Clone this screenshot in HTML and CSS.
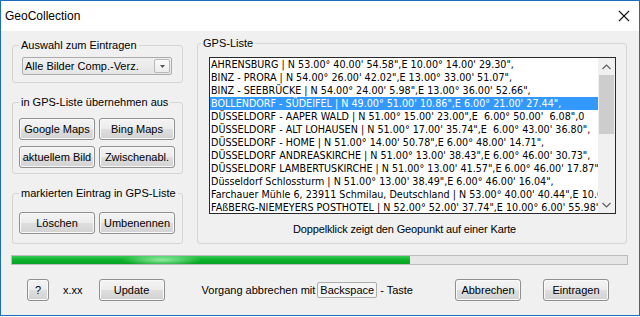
FILE: index.html
```html
<!DOCTYPE html>
<html lang="de">
<head>
<meta charset="utf-8">
<title>GeoCollection</title>
<link rel="stylesheet" href="styles.css">
</head>
<body>
<div class="window">
  <div class="titlebar">
    <span class="title">GeoCollection</span>
    <svg class="close" width="12" height="12" viewBox="0 0 12 12"><path d="M1 1 L11 11 M11 1 L1 11" stroke="#111" stroke-width="1.1" fill="none"/></svg>
  </div>
  <div class="main">
    <div class="leftcol">
      <fieldset class="group g1">
        <legend>Auswahl zum Eintragen</legend>
        <div class="combo">
          <span class="combo-text">Alle Bilder Comp.-Verz.</span>
          <span class="combo-btn"><svg width="5" height="3" viewBox="0 0 5 3"><path d="M0 0 H5 L2.5 3 Z" fill="#555"/></svg></span>
        </div>
      </fieldset>
      <fieldset class="group g2">
        <legend>in GPS-Liste übernehmen aus</legend>
        <div class="btngrid">
          <button class="btn w76">Google Maps</button>
          <button class="btn w76">Bing Maps</button>
          <button class="btn w76">aktuellem Bild</button>
          <button class="btn w76">Zwischenabl.</button>
        </div>
      </fieldset>
      <fieldset class="group g3">
        <legend>markierten Eintrag in GPS-Liste</legend>
        <div class="btngrid">
          <button class="btn w76">Löschen</button>
          <button class="btn w76">Umbenennen</button>
        </div>
      </fieldset>
    </div>
    <fieldset class="group gps">
      <legend>GPS-Liste</legend>
      <div class="listbox">
        <div class="items">
          <div class="item">AHRENSBURG | N 53.00° 40.00' 54.58",E 10.00° 14.00' 29.30",</div>
          <div class="item">BINZ - PRORA | N 54.00° 26.00' 42.02",E 13.00° 33.00' 51.07",</div>
          <div class="item">BINZ - SEEBRÜCKE | N 54.00° 24.00' 5.98",E 13.00° 36.00' 52.66",</div>
          <div class="item sel">BOLLENDORF - SÜDEIFEL | N 49.00° 51.00' 10.86",E 6.00° 21.00' 27.44",</div>
          <div class="item">DÜSSELDORF - AAPER WALD | N 51.00° 15.00' 23.00",E &nbsp;6.00° 50.00' &nbsp;6.08",0</div>
          <div class="item">DÜSSELDORF - ALT LOHAUSEN | N 51.00° 17.00' 35.74",E &nbsp;6.00° 43.00' 36.80",</div>
          <div class="item">DÜSSELDORF - HOME | N 51.00° 14.00' 50.78",E 6.00° 48.00' 14.71",</div>
          <div class="item">DÜSSELDORF ANDREASKIRCHE | N 51.00° 13.00' 38.43",E 6.00° 46.00' 30.73",</div>
          <div class="item">DÜSSELDORF LAMBERTUSKIRCHE | N 51.00° 13.00' 41.57",E 6.00° 46.00' 17.87",</div>
          <div class="item">Düsseldorf Schlossturm | N 51.00° 13.00' 38.49",E 6.00° 46.00' 16.04",</div>
          <div class="item">Farchauer Mühle 6, 23911 Schmilau, Deutschland | N 53.00° 40.00' 40.44",E 10.00°</div>
          <div class="item">FAßBERG-NIEMEYERS POSTHOTEL | N 52.00° 52.00' 37.74",E 10.00° 6.00' 55.98",</div>
        </div>
        <div class="scrollbar">
          <span class="arrow"><svg width="9" height="6" viewBox="0 0 9 6"><path d="M0.5 5 L4.5 1 L8.5 5" stroke="#606060" stroke-width="1.2" fill="none"/></svg></span>
          <div class="track"><div class="thumb"></div></div>
          <span class="arrow"><svg width="9" height="6" viewBox="0 0 9 6"><path d="M0.5 1 L4.5 5 L8.5 1" stroke="#606060" stroke-width="1.2" fill="none"/></svg></span>
        </div>
      </div>
      <div class="caption">Doppelklick zeigt den Geopunkt auf einer Karte</div>
    </fieldset>
  </div>
  <div class="progress"><div class="fill" style="width:64.7%"></div></div>
  <div class="bottom">
    <button class="btn w22">?</button>
    <span class="ver">x.xx</span>
    <button class="btn w66 upd">Update</button>
    <span class="abort">Vorgang abbrechen mit</span>
    <span class="key">Backspace</span>
    <span class="taste">- Taste</span>
    <button class="btn w66 cancel">Abbrechen</button>
    <button class="btn w66 ok">Eintragen</button>
  </div>
</div>
</body>
</html>
```
FILE: styles.css
```css
* { box-sizing: border-box; }
html, body { margin: 0; padding: 0; background: #ffffff; }
body { font-family: "Liberation Sans", Arial, sans-serif; font-size: 11px; color: #000; }

.window {
  width: 640px;
  height: 316px;
  border: 1px solid #1c6ebd;
  background: #f0f0f0;
  display: flex;
  flex-direction: column;
}

.titlebar {
  height: 30px;
  flex: none;
  background: #ffffff;
  display: flex;
  align-items: center;
  justify-content: space-between;
  padding: 0 9px 0 4px;
}
.title { font-size: 12px; color: #000; }
.close { display: block; }

.main {
  display: flex;
  align-items: flex-start;
  padding: 5px 0 0 11px;
  gap: 14px;
}

.leftcol {
  width: 171px;
  margin-top: 2px;
  display: flex;
  flex-direction: column;
  gap: 12px;
}

.group {
  margin: 0;
  min-width: 0;
  border: 1px solid #d5d5d5;
  border-radius: 3px;
}
.group legend {
  padding: 0 2px;
  margin-left: 0;
  line-height: 14px;
  font-size: 11px;
  white-space: nowrap;
}

.g1 { padding: 5px 10px 7px 9px; }
.g1 legend { margin-left: -3px; }
.g2 { padding: 9px 6px 5px 6px; }
.g3 { padding: 12px 6px 9px 6px; }

.combo {
  height: 18px;
  border: 1px solid #acacac;
  border-radius: 2px;
  background: linear-gradient(#f0f0f0, #e5e5e5);
  display: flex;
  align-items: center;
  justify-content: space-between;
  padding: 0 1px 0 2px;
}
.combo-text { line-height: 14px; }
.combo-btn {
  width: 16px;
  height: 14px;
  border: 1px solid #b8b8b8;
  border-radius: 2px;
  background: linear-gradient(#fbfbfb, #ececec);
  display: flex;
  align-items: center;
  justify-content: center;
}
.combo-btn svg { display: block; }

.btngrid {
  display: grid;
  grid-template-columns: 76px 76px;
  column-gap: 4px;
  row-gap: 6px;
}

.btn {
  height: 22px;
  padding: 0;
  margin: 0;
  border: 1px solid #8f8f8f;
  border-radius: 3px;
  background: linear-gradient(#f4f4f4 0%, #ececec 48%, #dedede 52%, #d2d2d2 100%);
  box-shadow: inset 0 0 0 1px #fafafa;
  font-family: "Liberation Sans", Arial, sans-serif;
  font-size: 11px;
  color: #000;
}
.w76 { width: 76px; }
.w66 { width: 66px; }
.w22 { width: 22px; }

.gps {
  width: 430px;
  padding: 7px 10px 7px 11px;
}
.gps legend { margin-left: -8px; }

.listbox {
  height: 157px;
  border: 1px solid #2a2a2a;
  background: #ffffff;
  display: flex;
}
.items {
  flex: 1;
  min-width: 0;
  overflow: hidden;
}
.item {
  height: 13px;
  line-height: 13px;
  padding-left: 1px;
  white-space: nowrap;
  font-family: "DejaVu Sans", Verdana, sans-serif;
  font-size: 9.6px;
}
.item.sel { background: #3399ff; color: #ffffff; }

.scrollbar {
  width: 17px;
  flex: none;
  background: #f0f0f0;
  display: flex;
  flex-direction: column;
}
.arrow {
  height: 17px;
  display: flex;
  align-items: center;
  justify-content: center;
  flex: none;
}
.arrow svg { display: block; }
.track { flex: 1; padding: 0 1px; }
.thumb { height: 59px; background: #cdcdcd; }

.caption {
  margin: 8px 0 0 84px;
  line-height: 14px;
  letter-spacing: -0.15px;
  white-space: nowrap;
}

.progress {
  margin: 11px 0 0 10px;
  width: 617px;
  height: 10px;
  border: 1px solid #bcbcbc;
  background: #e6e6e6;
}
.progress .fill {
  height: 100%;
  background:
    radial-gradient(ellipse 40px 6px at 150px 50%, rgba(190,255,200,0.75), rgba(190,255,200,0) 100%),
    linear-gradient(#37c956 0%, #0bb12a 50%, #07a325 100%);
}

.bottom {
  display: flex;
  align-items: center;
  margin-top: 14px;
  padding-left: 26px;
  height: 22px;
}
.ver { margin-left: 14px; }
.upd { margin-left: 16px; }
.abort { margin-left: 37px; }
.key {
  margin-left: 2px;
  height: 16px;
  line-height: 14px;
  padding: 0 2px;
  border: 1px solid #adadad;
  border-radius: 2px;
  background: #f5f5f5;
}
.taste { margin-left: 3px; }
.cancel { margin-left: auto; }
.ok { margin-left: 22px; margin-right: 30px; }
```
